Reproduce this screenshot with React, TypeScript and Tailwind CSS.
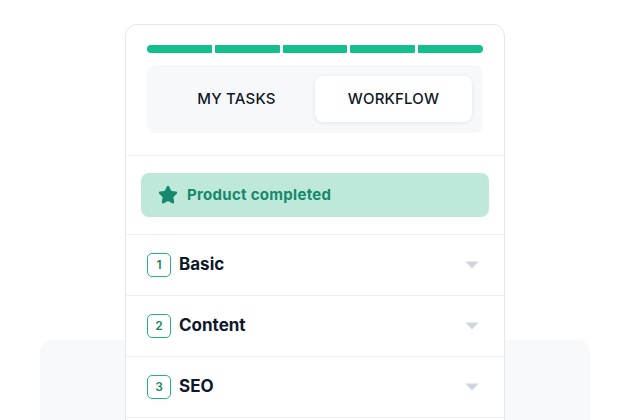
import { Star } from 'lucide-react';

const steps = [
  { n: 1, label: 'Basic' },
  { n: 2, label: 'Content' },
  { n: 3, label: 'SEO' },
];

function Caret() {
  return (
    <svg width="14" height="8" viewBox="0 0 14 8" className="text-[#cfd5dc]">
      <path d="M0.5 0.5h13L7 7.5z" fill="currentColor" />
    </svg>
  );
}

export default function App() {
  return (
    <div className="relative h-[420px] w-[630px] overflow-hidden bg-white font-['Inter',sans-serif]">
      {/* soft backdrop panel behind the card */}
      <div className="absolute left-[40px] top-[340px] h-[120px] w-[550px] rounded-xl bg-[#f8f9fb]" />

      <div className="relative ml-[125px] mt-[24px] w-[380px] rounded-xl border border-[#e4e7eb] bg-white">
        <div className="px-[21px] pt-[20px]">
          <div className="flex gap-[3px]">
            {[0, 1, 2, 3, 4].map((i) => (
              <div
                key={i}
                className={
                  'h-[8px] flex-1 bg-[#14bf8e] ' +
                  (i === 0 ? 'rounded-l-full' : i === 4 ? 'rounded-r-full' : 'rounded-[1px]')
                }
              />
            ))}
          </div>

          <div className="mt-[12px] flex h-[68px] rounded-lg bg-[#f7f8fa] p-[11px]">
            <div className="flex flex-1 items-center justify-center text-[15px] font-medium tracking-[0.2px] text-[#111827]">
              MY TASKS
            </div>
            <div className="flex flex-1 items-center justify-center rounded-lg bg-white text-[15px] font-medium tracking-[0.2px] text-[#111827] shadow-[0_1px_4px_rgba(15,23,42,0.08)]">
              WORKFLOW
            </div>
          </div>
        </div>

        <div className="mt-[22px] border-t border-[#eef0f2] px-[15px] pb-[17px] pt-[17px]">
          <div className="flex h-[44px] items-center gap-[9px] rounded-lg bg-[#bde8da] pl-[17px]">
            <Star size={20} className="fill-[#16896a] text-[#16896a]" strokeWidth={2} strokeLinejoin="round" />
            <span className="text-[15px] font-bold tracking-[0.3px] text-[#16896a]">Product completed</span>
          </div>
        </div>

        {steps.map((s) => (
          <div
            key={s.n}
            className="flex h-[61px] items-center border-t border-[#eef0f2] pl-[21px] pr-[25px]"
          >
            <span className="flex h-[24px] w-[24px] items-center justify-center rounded-[5px] border-[1.5px] border-[#25b382] text-[12px] font-semibold text-[#16875f]">
              {s.n}
            </span>
            <span className="ml-[8px] flex-1 text-[17px] font-bold text-[#0f172a]">{s.label}</span>
            <Caret />
          </div>
        ))}
        <div className="h-[20px] border-t border-[#eef0f2]" />
      </div>
    </div>
  );
}
